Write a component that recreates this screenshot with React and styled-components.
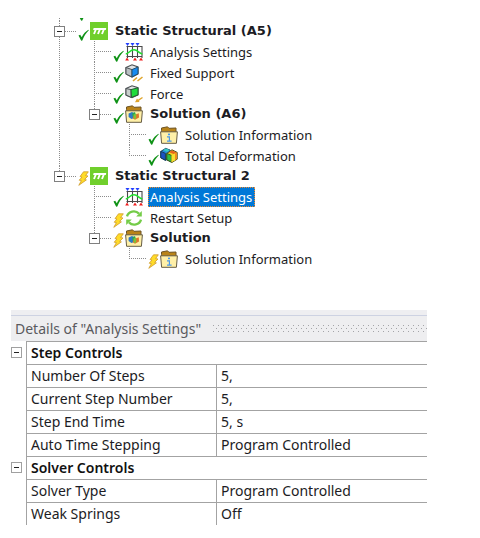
import React from "react";
import styled, { createGlobalStyle, css } from "styled-components";

const GlobalStyle = createGlobalStyle`
  *, *::before, *::after { box-sizing: border-box; }
  body { margin: 0; background: #fff; color: #1c1c24; }
  button { font: inherit; color: inherit; }
`;

const dotsDown = "repeating-linear-gradient(to bottom, #8c8c8c 0 1px, transparent 1px 2px)";
const dotsAcross = "repeating-linear-gradient(to right, #8c8c8c 0 1px, transparent 1px 2px)";

const Page = styled.main`
  padding: 18px 53px 12px 11px;
`;

const Tree = styled.ul`
  list-style: none;
  margin: 0 0 41px 43px;
  padding: 0;
  font: 13px/16px "Noto Sans", "Open Sans", sans-serif;
`;

const Branch = styled.ul`
  list-style: none;
  margin: 0;
  padding: 0 0 0 35px;
`;

const Node = styled.li`
  background-image: ${dotsDown};
  background-repeat: no-repeat;
  background-position: 5px 0;
  background-size: 1px ${(p) => (p.$last ? "10px" : "100%")};
`;

const Row = styled.div`
  display: flex;
  align-items: center;
  height: ${(p) => (p.$bold ? 20 : 21)}px;
  ${(p) =>
    p.$bold &&
    css`
      font-family: "DejaVu Sans", sans-serif;
      font-weight: 700;
    `}
`;

const CutRow = styled.div`
  display: flex;
  align-items: flex-end;
  height: 3px;
  overflow: hidden;
  padding-left: 24px;
`;

const Joint = styled.span`
  display: flex;
  align-items: center;
  flex: none;
  width: 24px;
  height: 11px;
  background: ${dotsAcross} 5px 5px / 18px 1px no-repeat;
`;

const Expander = styled.button`
  display: block;
  flex: none;
  width: 11px;
  height: 11px;
  padding: 0;
  border: 1px solid ${(p) => (p.$light ? "#a0a0a0" : "#808080")};
  background: linear-gradient(#222, #222) center / 5px 1px no-repeat #fff;
`;

const Status = styled.span`
  display: flex;
  flex: none;
  align-self: flex-end;
  width: 12px;
`;

const IconBox = styled.span`
  display: flex;
  flex: none;
  width: 18px;
  margin-right: 5px;
`;

const Label = styled.button`
  padding: 1px 2px 1px 1px;
  border: 1px solid transparent;
  background: transparent;
  white-space: nowrap;
  font-weight: inherit;
  ${(p) =>
    p.$selected &&
    css`
      border: 1px dotted #f08a30;
      background: #0078d7;
      color: #fff;
    `}
`;

const Details = styled.section`
  font: 14px/22px "Noto Sans", "Open Sans", sans-serif;
`;

const TopStrip = styled.div`
  height: 6px;
  background: #eeeef1;
  border-bottom: 1px solid #cdd2e2;
`;

const TitleBar = styled.header`
  display: flex;
  align-items: center;
  gap: 12px;
  height: 25px;
  padding-left: 4px;
  background: #eeeef0;
  color: #5a5a5e;
`;

const Title = styled.h2`
  margin: 0;
  font-size: 14px;
  font-weight: 400;
  white-space: nowrap;
`;

const gripRow = "repeating-linear-gradient(to right, #a4a4a8 0 1px, transparent 1px 5px)";

const Grip = styled.span`
  flex: 1;
  height: 7px;
  background:
    ${gripRow} 0 0 / 100% 1px no-repeat,
    ${gripRow} 3px 3px / 100% 1px no-repeat,
    ${gripRow} 0 6px / 100% 1px no-repeat;
`;

const Grid = styled.table`
  width: 100%;
  border-collapse: separate;
  border-spacing: 0;
  table-layout: fixed;
`;

const ToggleCol = styled.col`
  width: 15px;
`;

const NameCol = styled.col`
  width: 190px;
`;

const line = "1px solid #a3a3a3";

const ToggleCell = styled.td`
  padding: 0;
`;

const GroupHead = styled.th`
  height: 23px;
  padding: 0 4px;
  border-top: ${line};
  border-left: ${line};
  font-weight: 600;
  text-align: left;
  color: #111;
`;

const NameCell = styled.th`
  height: 23px;
  padding: 0 4px;
  border-top: ${line};
  border-left: ${line};
  font-weight: 400;
  text-align: left;
  white-space: nowrap;
`;

const ValueCell = styled.td`
  padding: 0 4px;
  border-top: ${line};
  border-left: ${line};
  white-space: nowrap;
`;

const Check = () => (
  <svg width="12" height="12" viewBox="0 0 12 12" aria-label="Up to date">
    <path d="M0.5 6.5 L2.2 5.8 L3.8 8.2 C5.4 5 7.6 2.4 10.4 0.8 L10.8 1.3 C8 4 6 7.4 4.3 11.6 L3.2 11.8 Z" fill="#0f9216" />
  </svg>
);

const Bolt = () => (
  <svg width="12" height="15" viewBox="0 0 12 15" aria-label="Needs solving">
    <path d="M5.5 0.8 L10.3 0.8 L7.6 4.6 L10 5 L6.6 8.4 L8.4 8.9 L0.8 14.3 L3.4 9.6 L1.2 9.2 L4 6 L2 5.6 Z" fill="#ffdc28" stroke="#cf9a2c" strokeWidth="0.8" />
  </svg>
);

const StructuralIcon = () => (
  <svg width="18" height="18" viewBox="0 0 18 18">
    <rect width="18" height="18" fill="#70cf2c" />
    <path d="M3.6 6 H16.2 L15.8 8 H3.1 Z" fill="#fff" />
    <path d="M5.8 7.5 L4 12 M9.8 7.5 L8 12 M13.8 7.5 L12 12" stroke="#fff" strokeWidth="1.9" />
  </svg>
);

const SettingsIcon = () => (
  <svg width="18" height="18" viewBox="0 0 18 18">
    <path d="M2.5 3 V15 M7.5 3 V15 M12.5 3 V15 M17 3 V15 M1.5 3.5 H17.5 M1.5 13.5 H17.5" stroke="#4a4a4a" strokeWidth="1.1" fill="none" />
    <path d="M0.5 0 H4.5 L2.5 3 Z M5.5 0 H9.5 L7.5 3 Z M10.5 0 H14.5 L12.5 3 Z" fill="#2440ff" />
    <path d="M2 14.5 L4 17.5 H0.2 Z M10 14.5 L12 17.5 H8 Z M16 14.5 L18 17.5 H14 Z" fill="#f01c1c" />
    <path d="M0.8 11 C4 10.5 5 6.8 9 6.8 C13 6.8 13.6 10.5 17.4 11" stroke="#1fe02c" strokeWidth="1.5" fill="none" />
  </svg>
);

const FixedIcon = () => (
  <svg width="18" height="18" viewBox="0 0 18 18">
    <path d="M1 3.5 L7 0.8 L13 3 V9.8 L7 13 L1 10 Z" fill="#dfe3e5" stroke="#4c5154" strokeWidth="1.2" />
    <path d="M1 3.5 L7 5.6 V13 L1 10 Z" fill="#b9bfc2" stroke="#4c5154" />
    <path d="M7 5.6 L13 3 V9.8 L7 13 Z" fill="#168af0" stroke="#23506f" />
    <path d="M8 17 L12 13.5 M12.5 17 L17.5 13" stroke="#dfa52c" strokeWidth="1.6" />
  </svg>
);

const ForceIcon = () => (
  <svg width="18" height="18" viewBox="0 0 18 18">
    <path d="M1 3.5 L7 0.8 L13 2.6 V9.8 L7 12.6 L1 10 Z" fill="#e3e7e5" stroke="#4c5154" strokeWidth="1.2" />
    <path d="M1 3.5 L6 4.6 V12.3 L1 10 Z" fill="#c9cfcc" stroke="#4c5154" />
    <path d="M6 4.6 L13 2.8 V9.8 L6.5 12.4 Z" fill="#1fdc3a" stroke="#2a5c34" />
    <path d="M17.5 12.5 L12.5 15.8" stroke="#dfa52c" strokeWidth="1.4" />
    <path d="M10 17.2 L12 13.5 L14.6 17 Z" fill="#dfa52c" />
  </svg>
);

const FolderBase = () => (
  <>
    <path d="M1.5 4.5 V2 L7.5 0.8 L9 2.3 L16 2 V7 H1.5 Z" fill="#b98318" stroke="#6d5426" />
    <path d="M0.6 5.8 H17.4 L16.4 17.3 H1.6 Z" fill="#fff0a8" stroke="#665c44" />
  </>
);

const SolutionIcon = () => (
  <svg width="18" height="18" viewBox="0 0 18 18">
    <FolderBase />
    <path d="M3.6 8.6 L7 7 L9.6 8.2 V13 L6.4 14 L3.6 12 Z" fill="#2f78c8" />
    <path d="M7 8.4 L10 7 L11 10.5 L8 13 Z" fill="#27a65a" />
    <path d="M9 10 L13.8 8.2 L14 12.4 L10 14.8 L7.6 13.2 Z" fill="#e0742c" />
    <path d="M8.6 9.6 L11.2 8.8 V13.4 L9 14 Z" fill="#7cc436" />
  </svg>
);

const InfoFolderIcon = () => (
  <svg width="18" height="18" viewBox="0 0 18 18">
    <FolderBase />
    <rect x="8" y="7.6" width="2" height="1.6" fill="#4a98ea" />
    <path d="M7 10.8 H9.4 V15 M7 15.2 H11.6" stroke="#4a98ea" strokeWidth="1.2" fill="none" />
  </svg>
);

const DeformationIcon = () => (
  <svg width="18" height="18" viewBox="0 0 18 18">
    <path d="M0.8 4.4 L5.6 1.4 L10 3 V10.4 L5.6 13.4 L0.8 10.8 Z" fill="#2389dc" stroke="#174058" />
    <path d="M0.8 4.4 L5.4 6.4 V13.2 L0.8 10.8 Z" fill="#1c52c4" stroke="#174058" />
    <path d="M3 3 L6 1.5 L10 3 L7 5 Z" fill="#36c8c4" />
    <path d="M6.8 6.4 L12 2.8 L17.2 5.4 V12.2 L12 15.4 L6.8 12.8 Z" fill="#f3d224" stroke="#4c4a22" />
    <path d="M6.8 6.4 L11.4 8.4 V15.2 L6.8 12.8 Z" fill="#2cc044" stroke="#37591f" />
    <path d="M11.4 8.4 L15 6.6 V13.4 L11.4 15.2 Z" fill="#f5e032" />
    <path d="M15 6.6 L16.9 5.6 V12 L15 13.4 Z" fill="#f08a1e" />
    <path d="M9 5.2 L12 3.4 L16.5 5.5 L13.6 7 Z" fill="#e8641e" />
  </svg>
);

const RestartIcon = () => (
  <svg width="18" height="18" viewBox="0 0 18 18">
    <path d="M2 7.4 A7 6.6 0 0 1 14 4.6 M16 10.6 A7 6.6 0 0 1 4 13.4" stroke="#74cc48" strokeWidth="2.3" fill="none" />
    <path d="M16.8 2 V7.6 H11.2 Z M1.2 16 V10.4 H6.8 Z" fill="#74cc48" />
  </svg>
);

const icons = {
  structural: StructuralIcon,
  settings: SettingsIcon,
  fixed: FixedIcon,
  force: ForceIcon,
  solution: SolutionIcon,
  info: InfoFolderIcon,
  deformation: DeformationIcon,
  restart: RestartIcon,
};

const outline = [
  {
    label: "Static Structural (A5)", icon: "structural", done: true,
    children: [
      { label: "Analysis Settings", icon: "settings", done: true },
      { label: "Fixed Support", icon: "fixed", done: true },
      { label: "Force", icon: "force", done: true },
      {
        label: "Solution (A6)", icon: "solution", done: true,
        children: [
          { label: "Solution Information", icon: "info", done: true },
          { label: "Total Deformation", icon: "deformation", done: true },
        ],
      },
    ],
  },
  {
    label: "Static Structural 2", icon: "structural",
    children: [
      { label: "Analysis Settings", icon: "settings", done: true, selected: true },
      { label: "Restart Setup", icon: "restart" },
      {
        label: "Solution", icon: "solution",
        children: [{ label: "Solution Information", icon: "info" }],
      },
    ],
  },
];

const groups = [
  {
    name: "Step Controls",
    rows: [
      ["Number Of Steps", "5,"],
      ["Current Step Number", "5,"],
      ["Step End Time", "5, s"],
      ["Auto Time Stepping", "Program Controlled"],
    ],
  },
  {
    name: "Solver Controls",
    rows: [
      ["Solver Type", "Program Controlled"],
      ["Weak Springs", "Off"],
    ],
  },
];

function TreeNode({ item, last }) {
  const Icon = icons[item.icon];
  const parent = Boolean(item.children);
  return (
    <Node $last={last}>
      <Row $bold={parent}>
        <Joint>{parent && <Expander type="button" aria-label={`Collapse ${item.label}`} aria-expanded="true" />}</Joint>
        <Status>{item.done ? <Check /> : <Bolt />}</Status>
        <IconBox><Icon /></IconBox>
        <Label type="button" $selected={item.selected}>{item.label}</Label>
      </Row>
      {parent && (
        <Branch>
          {item.children.map((child, i) => (
            <TreeNode key={child.label} item={child} last={i === item.children.length - 1} />
          ))}
        </Branch>
      )}
    </Node>
  );
}

export default function App() {
  return (
    <Page>
      <GlobalStyle />
      <Tree>
        <Node><CutRow><Check /></CutRow></Node>
        {outline.map((item, i) => (
          <TreeNode key={item.label} item={item} last={i === outline.length - 1} />
        ))}
      </Tree>
      <Details>
        <TopStrip />
        <TitleBar>
          <Title>Details of "Analysis Settings"</Title>
          <Grip />
        </TitleBar>
        <Grid>
          <colgroup><ToggleCol /><NameCol /><col /></colgroup>
          {groups.map((group) => (
            <tbody key={group.name}>
              <tr>
                <ToggleCell><Expander type="button" $light aria-label={`Collapse ${group.name}`} aria-expanded="true" /></ToggleCell>
                <GroupHead colSpan={2} scope="colgroup">{group.name}</GroupHead>
              </tr>
              {group.rows.map(([name, value]) => (
                <tr key={name}>
                  <ToggleCell />
                  <NameCell scope="row">{name}</NameCell>
                  <ValueCell>{value}</ValueCell>
                </tr>
              ))}
            </tbody>
          ))}
        </Grid>
      </Details>
    </Page>
  );
}
